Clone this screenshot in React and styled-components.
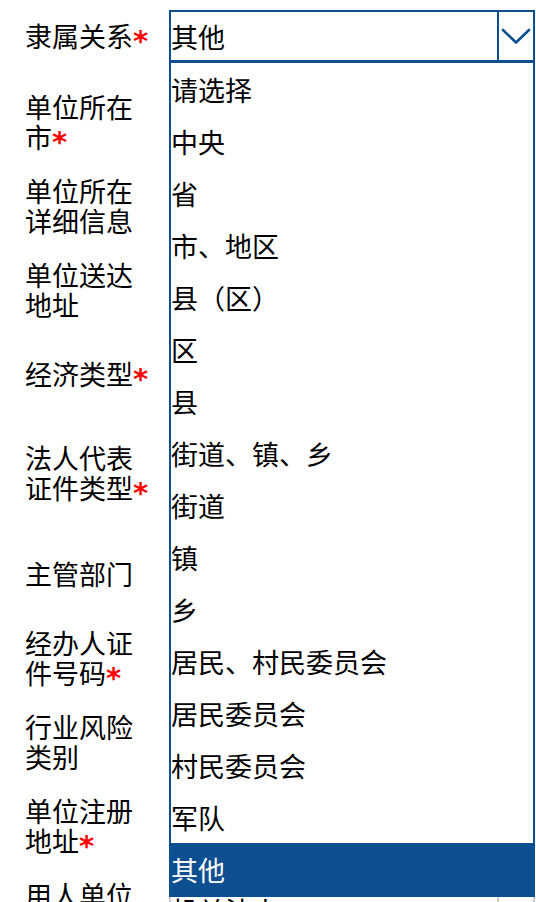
import React from 'react'
import styled, { createGlobalStyle } from 'styled-components'

// ===================================

const GlobalStyle = createGlobalStyle`
  html, body {
    margin: 0;
    padding: 0;
    width: 536px;
    height: 902px;
    overflow: hidden;
    background: #ffffff;
  }
  body {
    font-family: "Noto Sans CJK SC", "Noto Sans", sans-serif;
    color: #000000;
  }
`

const BLUE = '#0e4f92'

const FormWrapper = styled.div`
  display: flex;
  flex-direction: column;
  padding-top: 10px;
`

const FormRow = styled.div`
  display: flex;
  align-items: center;
  min-height: ${(p) => (p.$first ? 52 : 60)}px;
  margin-bottom: ${(p) => p.$gap}px;
`

const FieldLabel = styled.div`
  flex: 0 0 128px;
  padding: 0 16px 0 25px;
  font-size: 27px;
  line-height: 30px;
  font-weight: 400;
`

const RequiredMark = styled.span`
  color: #ff0000;
  font-family: "DejaVu Sans", sans-serif;
  font-weight: bold;
  font-size: 29px;
  line-height: 0;
  vertical-align: -4px;
`

const SelectBox = styled.div`
  position: relative;
  flex: 0 0 366px;
  height: 52px;
  box-sizing: border-box;
  border: 2px solid ${(p) => (p.$active ? BLUE : '#cccccc')};
  display: flex;
  align-items: stretch;
  background: #ffffff;
`

const SelectValue = styled.div`
  flex: 1;
  display: flex;
  align-items: center;
  font-size: 27px;
  white-space: nowrap;
`

const ArrowCell = styled.div`
  flex: 0 0 34px;
  border-left: 2px solid ${(p) => (p.$active ? BLUE : '#cccccc')};
  display: flex;
  align-items: center;
  justify-content: center;
`

const TextInput = styled.div`
  flex: 0 0 366px;
  height: 52px;
  box-sizing: border-box;
  border: 2px solid #cccccc;
`

const OptionList = styled.ul`
  position: absolute;
  top: 49px;
  left: -2px;
  width: 366px;
  box-sizing: border-box;
  margin: 0;
  padding: 0;
  list-style: none;
  border: 2px solid ${BLUE};
  background: #ffffff;
  z-index: 10;
`

const OptionItem = styled.li`
  display: flex;
  align-items: center;
  font-size: 27px;
  white-space: nowrap;
  color: ${(p) => (p.$selected ? '#ffffff' : '#000000')};
  background: ${(p) => (p.$selected ? BLUE : 'transparent')};
  margin-bottom: ${(p) => (p.$selected ? '-2px' : '0')};
  height: ${(p) => (p.$selected ? 54 : 52)}px;
  padding-bottom: ${(p) => (p.$selected ? 2 : 0)}px;
  box-sizing: border-box;
`

// ===================================

const OPTIONS = [
  '请选择',
  '中央',
  '省',
  '市、地区',
  '县（区）',
  '区',
  '县',
  '街道、镇、乡',
  '街道',
  '镇',
  '乡',
  '居民、村民委员会',
  '居民委员会',
  '村民委员会',
  '军队',
  '其他',
]

const FIELDS = [
  { label: '单位所在市', required: true, kind: 'select', gap: 24 },
  { label: '单位所在详细信息', kind: 'input', gap: 24 },
  { label: '单位送达地址', kind: 'input', gap: 24 },
  { label: '经济类型', required: true, kind: 'select', gap: 39 },
  { label: '法人代表证件类型', required: true, kind: 'select', gap: 41 },
  { label: '主管部门', kind: 'input', gap: 24 },
  { label: '经办人证件号码', required: true, kind: 'input', gap: 24 },
  { label: '行业风险类别', kind: 'select', gap: 24 },
  { label: '单位注册地址', required: true, kind: 'input', gap: 24 },
  { label: '用人单位性质', kind: 'select', value: '机关法人', gap: 24 },
]

const Chevron = ({ color }) => (
  <svg width="30" height="17" viewBox="0 0 30 17">
    <polyline
      points="2,2 15,14.5 28,2"
      fill="none"
      stroke={color}
      strokeWidth="2.6"
      strokeLinecap="round"
      strokeLinejoin="round"
    />
  </svg>
)

const Label = ({ text, required }) => (
  <FieldLabel>
    {text}
    {required && <RequiredMark>*</RequiredMark>}
  </FieldLabel>
)

const App = () => {
  const current = '其他'

  return (
    <>
      <GlobalStyle />
      <FormWrapper>
        <FormRow $first $gap={30}>
          <Label text="隶属关系" required />
          <SelectBox $active>
            <SelectValue>{current}</SelectValue>
            <ArrowCell $active>
              <Chevron color={BLUE} />
            </ArrowCell>
            <OptionList>
              {OPTIONS.map((opt) => (
                <OptionItem key={opt} $selected={opt === current}>
                  {opt}
                </OptionItem>
              ))}
            </OptionList>
          </SelectBox>
        </FormRow>

        {FIELDS.map((field) => (
          <FormRow key={field.label} $gap={field.gap}>
            <Label text={field.label} required={field.required} />
            {field.kind === 'select' ? (
              <SelectBox>
                <SelectValue>{field.value || '请选择'}</SelectValue>
                <ArrowCell>
                  <Chevron color="#999999" />
                </ArrowCell>
              </SelectBox>
            ) : (
              <TextInput />
            )}
          </FormRow>
        ))}
      </FormWrapper>
    </>
  )
}

export default App
